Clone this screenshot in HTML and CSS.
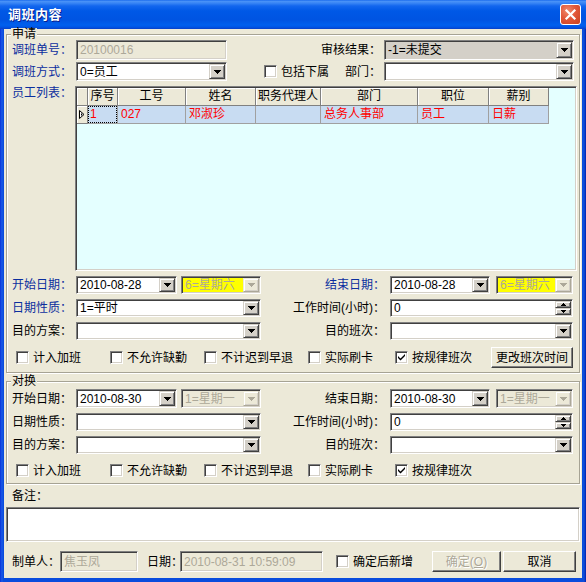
FILE: index.html
```html
<!DOCTYPE html>
<html lang="zh-CN">
<head>
<meta charset="utf-8">
<title>调班内容</title>
<link rel="stylesheet" href="styles.css">
</head>
<body>
<div class="window">
  <div class="titlebar">
    <span class="title">调班内容</span>
    <span class="close"><svg width="19" height="19" viewBox="0 0 19 19"><path d="M5.5 5.5 L13.5 13.5 M13.5 5.5 L5.5 13.5" stroke="#fff" stroke-width="2.2" stroke-linecap="square"/></svg></span>
  </div>
  <div class="client">
    <fieldset class="group g1">
      <legend>申请</legend>
      <div class="row h20">
        <span class="lbl blue">调班单号：</span>
        <div class="field dis w151"><span class="val">20100016</span></div>
        <span class="rlbl">审核结果：</span>
        <div class="field grey w190"><span class="val">-1=未提交</span><span class="dd"><i class="arr"></i></span></div>
      </div>
      <div class="row h19 mt2">
        <span class="lbl blue">调班方式：</span>
        <div class="field w151"><span class="val">0=员工</span><span class="dd"><i class="arr"></i></span></div>
        <span class="ck ck-sub"><span class="chk"></span>包括下属</span>
        <span class="rlbl">部门：</span>
        <div class="field w190"><span class="val"></span><span class="dd"><i class="arr"></i></span></div>
      </div>
      <div class="row list-row">
        <span class="lbl lbl-list blue">员工列表：</span>
        <div class="grid">
          <div class="grow ghead">
            <span class="gc gi"></span><span class="gc">序号</span><span class="gc">工号</span><span class="gc">姓名</span><span class="gc">职务代理人</span><span class="gc">部门</span><span class="gc">职位</span><span class="gc">薪别</span>
          </div>
          <div class="grow gdata">
            <span class="gc gi"><svg width="6" height="9" viewBox="0 0 6 9"><path d="M0.5 0.5 L5 4.5 L0.5 8.5 Z" fill="#fff" stroke="#000"/><path d="M2 3 L3.5 4.5 L2 6 Z" fill="#000"/></svg></span><span class="gc"><span class="focus">1</span></span><span class="gc">027</span><span class="gc">邓淑珍</span><span class="gc"></span><span class="gc">总务人事部</span><span class="gc">员工</span><span class="gc">日薪</span>
          </div>
        </div>
      </div>
      <div class="row h18 mt5 pr6">
        <span class="lbl blue">开始日期：</span>
        <div class="field w101"><span class="val">2010-08-28</span><span class="dd"><i class="arr"></i></span></div>
        <div class="field yellow w80 ml4"><span class="val">6=星期六</span><span class="dd off"><i class="arr"></i></span></div>
        <span class="rlbl rl5 blue">结束日期：</span>
        <div class="field w100"><span class="val">2010-08-28</span><span class="dd"><i class="arr"></i></span></div>
        <div class="field yellow w77 ml6"><span class="val">6=星期六</span><span class="dd off"><i class="arr"></i></span></div>
      </div>
      <div class="row h18 mt5 pr6">
        <span class="lbl blue">日期性质：</span>
        <div class="field w185"><span class="val">1=平时</span><span class="dd"><i class="arr"></i></span></div>
        <span class="rlbl rl5">工作时间(小时)：</span>
        <div class="field w183"><span class="val">0</span><span class="spin"><span class="sb"><i class="up"></i></span><span class="sb"><i class="down"></i></span></span></div>
      </div>
      <div class="row h18 mt5 pr6">
        <span class="lbl">目的方案：</span>
        <div class="field w185"><span class="val"></span><span class="dd"><i class="arr"></i></span></div>
        <span class="rlbl rl5">目的班次：</span>
        <div class="field w183"><span class="val"></span><span class="dd"><i class="arr"></i></span></div>
      </div>
      <div class="row h21 mt7 pr6">
        <span class="ck c1"><span class="chk"></span>计入加班</span>
        <span class="ck c2"><span class="chk"></span>不允许缺勤</span>
        <span class="ck c3"><span class="chk"></span>不计迟到早退</span>
        <span class="ck c4"><span class="chk"></span>实际刷卡</span>
        <span class="ck"><span class="chk on"><svg width="7" height="7" viewBox="0 0 7 7"><path d="M0 2 L2.5 4.5 L7 0 V2 L2.5 6.5 L0 4 Z" fill="#000"/></svg></span>按规律班次</span>
        <span class="btn b-change">更改班次时间</span>
      </div>
    </fieldset>

    <fieldset class="group g2">
      <legend>对换</legend>
      <div class="row h19 pr6">
        <span class="lbl">开始日期：</span>
        <div class="field w101"><span class="val">2010-08-30</span><span class="dd"><i class="arr"></i></span></div>
        <div class="field dis w80 ml4"><span class="val">1=星期一</span><span class="dd off"><i class="arr"></i></span></div>
        <span class="rlbl rl5">结束日期：</span>
        <div class="field w100"><span class="val">2010-08-30</span><span class="dd"><i class="arr"></i></span></div>
        <div class="field dis w77 ml6"><span class="val">1=星期一</span><span class="dd off"><i class="arr"></i></span></div>
      </div>
      <div class="row h18 mt5 pr6">
        <span class="lbl">日期性质：</span>
        <div class="field w185"><span class="val"></span><span class="dd"><i class="arr"></i></span></div>
        <span class="rlbl rl5">工作时间(小时)：</span>
        <div class="field w183"><span class="val">0</span><span class="spin"><span class="sb"><i class="up"></i></span><span class="sb"><i class="down"></i></span></span></div>
      </div>
      <div class="row h18 mt5 pr6">
        <span class="lbl">目的方案：</span>
        <div class="field w185"><span class="val"></span><span class="dd"><i class="arr"></i></span></div>
        <span class="rlbl rl5">目的班次：</span>
        <div class="field w183"><span class="val"></span><span class="dd"><i class="arr"></i></span></div>
      </div>
      <div class="row h21 mt6 pr6">
        <span class="ck c1"><span class="chk"></span>计入加班</span>
        <span class="ck c2"><span class="chk"></span>不允许缺勤</span>
        <span class="ck c3"><span class="chk"></span>不计迟到早退</span>
        <span class="ck c4"><span class="chk"></span>实际刷卡</span>
        <span class="ck"><span class="chk on"><svg width="7" height="7" viewBox="0 0 7 7"><path d="M0 2 L2.5 4.5 L7 0 V2 L2.5 6.5 L0 4 Z" fill="#000"/></svg></span>按规律班次</span>
      </div>
    </fieldset>

    <div class="memo-label">备注：</div>
    <div class="memo"></div>

    <div class="row foot">
      <span class="flbl f1">制单人：</span>
      <div class="field dis w78"><span class="val">焦玉凤</span></div>
      <span class="flbl f2">日期：</span>
      <div class="field dis w143"><span class="val">2010-08-31 10:59:09</span></div>
      <span class="ck ck-new"><span class="chk"></span>确定后新增</span>
      <span class="btn b-ok disabled">确定(<u>O</u>)</span>
      <span class="btn b-cancel">取消</span>
    </div>
  </div>
</div>
</body>
</html>
```

FILE: styles.css
```css
* { box-sizing: border-box; }
html, body { margin: 0; padding: 0; }
body {
  width: 586px;
  height: 582px;
  font-family: "Liberation Sans", "Noto Sans CJK SC", sans-serif;
  font-size: 12px;
  line-height: 14px;
  color: #000;
  background: #fff;
  overflow: hidden;
}

.window {
  width: 586px;
  height: 582px;
  display: flex;
  flex-direction: column;
  background: linear-gradient(to right, #0831D9 0, #1C5DE8 2px, #0A4CDD 3px, #0A4CDD 583px, #1050D8 584px, #0020B0 586px);
}

.titlebar {
  height: 29px;
  flex: none;
  display: flex;
  align-items: center;
  justify-content: space-between;
  padding: 0 5px 0 8px;
  background: linear-gradient(to bottom, #0A5DE9 0px, #4D95F8 1px, #3A86F5 3px, #1266EE 6px, #0058E6 11px, #0054E2 20px, #0060EE 25px, #0056E6 27px, #0840C8 29px);
}
.title {
  color: #fff;
  font-weight: bold;
  font-size: 13px;
  line-height: 16px;
  text-shadow: 1px 1px 0 #0A1E8C;
  letter-spacing: 0.5px;
}
.close {
  width: 21px;
  height: 21px;
  border: 1px solid #fff;
  border-radius: 3px;
  background: radial-gradient(circle at 35% 30%, #F08A6C 0, #E2583A 45%, #C8401E 100%);
  display: flex;
  align-items: center;
  justify-content: center;
}
.close svg { display: block; }

.client {
  flex: 1;
  margin: 0 4px 4px 4px;
  background: #ECE9D8;
  display: flex;
  flex-direction: column;
}

/* group boxes */
.group {
  margin: 0 0 0 2px;
  width: 574px;
  min-width: 0;
  padding: 0 0 4px 0;
  border: 1px solid #A6A394;
  box-shadow: inset 1px 1px #fff, 1px 1px #fff;
}
.group legend {
  padding: 0 1px;
  margin-left: 4px;
  line-height: 12px;
  height: 12px;
  background: #ECE9D8;
}
.g1 { margin-top: -1px; }
.g2 { margin-top: 2px; padding-top: 2px; padding-bottom: 2px; }

/* rows */
.row {
  display: flex;
  align-items: center;
  padding-right: 5px;
  white-space: nowrap;
}
.h18 { height: 18px; }
.h19 { height: 19px; }
.h20 { height: 20px; }
.h21 { height: 21px; }
.mt2 { margin-top: 2px; }
.mt5 { margin-top: 5px; }
.mt6 { margin-top: 6px; }
.mt7 { margin-top: 7px; }
.pr6 { padding-right: 6px; }
.ml4 { margin-left: 4px; }
.ml6 { margin-left: 6px; }

.lbl {
  margin-left: 5px;
  width: 64px;
  flex: none;
}
.blue { color: #0B2E9E; }
.rlbl {
  flex: 1;
  text-align: right;
  padding-right: 3px;
}
.rl5 { padding-right: 5px; }

.list-row {
  margin-top: 5px;
  align-items: flex-start;
  padding-right: 2px;
}
.lbl-list { width: 63px; margin-top: 0; }

/* fields */
.field {
  flex: none;
  align-self: stretch;
  display: flex;
  padding: 1px;
  background: #fff;
  border: 1px solid;
  border-color: #808080 #fff #fff #808080;
  box-shadow: inset 1px 1px #404040, inset -1px -1px #D4D0C8;
  overflow: hidden;
}
.field .val {
  flex: 1;
  min-width: 0;
  align-self: center;
  padding-left: 2px;
  overflow: hidden;
  white-space: nowrap;
}
.field.dis { background: #ECE9D8; color: #ACA899; }
.field.grey { background: #D4D0C8; }
.field.yellow { background: #FFFF00; color: #ACA899; }
.w77 { width: 77px; }
.w78 { width: 78px; }
.w80 { width: 80px; }
.w100 { width: 100px; }
.w101 { width: 101px; }
.w143 { width: 143px; }
.w151 { width: 151px; }
.w183 { width: 183px; }
.w185 { width: 185px; }
.w190 { width: 190px; }

.dd {
  width: 16px;
  flex: none;
  display: flex;
  align-items: center;
  justify-content: center;
  background: #D4D0C8;
  border: 1px solid;
  border-color: #D4D0C8 #404040 #404040 #D4D0C8;
  box-shadow: inset 1px 1px #fff, inset -1px -1px #808080;
}
.dd.off {
  background: #ECE9D8;
  border-color: #ECE9D8 #ACA899 #ACA899 #ECE9D8;
  box-shadow: inset 1px 1px #fff, inset -1px -1px #D4D0C8;
}
.arr {
  --c: #000;
  display: block;
  width: 7px;
  height: 4px;
  background:
    linear-gradient(var(--c), var(--c)) 0 0 / 7px 1px no-repeat,
    linear-gradient(var(--c), var(--c)) 1px 1px / 5px 1px no-repeat,
    linear-gradient(var(--c), var(--c)) 2px 2px / 3px 1px no-repeat,
    linear-gradient(var(--c), var(--c)) 3px 3px / 1px 1px no-repeat;
}
.dd.off .arr { --c: #ACA899; }

.spin {
  width: 16px;
  flex: none;
  display: flex;
  flex-direction: column;
}
.sb {
  flex: 1;
  display: flex;
  align-items: center;
  justify-content: center;
  background: #D4D0C8;
  border: 1px solid;
  border-color: #D4D0C8 #404040 #404040 #D4D0C8;
  box-shadow: inset 1px 1px #fff, inset -1px -1px #808080;
}
.up, .down {
  display: block;
  width: 5px;
  height: 3px;
}
.up {
  background:
    linear-gradient(#000, #000) 2px 0 / 1px 1px no-repeat,
    linear-gradient(#000, #000) 1px 1px / 3px 1px no-repeat,
    linear-gradient(#000, #000) 0 2px / 5px 1px no-repeat;
}
.down {
  background:
    linear-gradient(#000, #000) 0 0 / 5px 1px no-repeat,
    linear-gradient(#000, #000) 1px 1px / 3px 1px no-repeat,
    linear-gradient(#000, #000) 2px 2px / 1px 1px no-repeat;
}

/* checkboxes */
.ck {
  display: inline-flex;
  align-items: center;
  gap: 4px;
  flex: none;
}
.chk {
  width: 13px;
  height: 13px;
  flex: none;
  background: #fff;
  border: 1px solid;
  border-color: #808080 #fff #fff #808080;
  box-shadow: inset 1px 1px #404040, inset -1px -1px #D4D0C8;
  display: flex;
  align-items: center;
  justify-content: center;
}
.chk svg { display: block; }
.ck-sub { margin-left: 37px; }
.c1 { margin-left: 9px; width: 94px; }
.c2 { width: 94px; }
.c3 { width: 104px; }
.c4 { width: 87px; }

/* buttons */
.btn {
  flex: none;
  align-self: stretch;
  display: flex;
  align-items: center;
  justify-content: center;
  background: #ECE9D8;
  border: 1px solid;
  border-color: #fff #404040 #404040 #fff;
  box-shadow: inset -1px -1px #808080;
}
.b-change { margin-left: auto; width: 82px; }
.btn.disabled { color: #ACA899; text-shadow: 1px 1px 0 #fff; }
.btn u { text-decoration: underline; }

/* grid */
.grid {
  width: 502px;
  height: 185px;
  flex: none;
  padding: 1px;
  background: #E4FFFF;
  border: 1px solid;
  border-color: #808080 #fff #fff #808080;
  box-shadow: inset 1px 1px #404040, inset -1px -1px #D4D0C8;
}
.grow {
  display: grid;
  grid-template-columns: 11px 30px 68px 70px 65px 97px 71px 60px;
  height: 18px;
}
.gc {
  line-height: 17px;
  white-space: nowrap;
  overflow: hidden;
}
.ghead .gc {
  background: #ECE9D8;
  text-align: center;
  border-right: 1px solid #808080;
  border-bottom: 1px solid #808080;
  box-shadow: inset 1px 1px #fff;
}
.gdata .gc {
  background: #C8DCF2;
  color: #f00;
  padding-left: 3px;
  border-right: 1px solid #A0A0A0;
  border-bottom: 1px solid #A0A0A0;
}
.gdata .gc.gi {
  background: #ECE9D8;
  padding-left: 2px;
  border-right: 1px solid #808080;
  border-bottom: 1px solid #808080;
  box-shadow: inset 1px 1px #fff;
  display: flex;
  align-items: center;
}
.gdata .gc:nth-child(2) { padding: 0; }
.focus {
  display: block;
  height: 17px;
  padding-left: 2px;
  outline: 1px dotted #000;
  outline-offset: -1px;
}

/* memo + footer */
.memo-label {
  margin: 6px 0 0 8px;
  line-height: 12px;
  height: 12px;
}
.memo {
  margin: 5px 0 0 2px;
  width: 574px;
  height: 35px;
  background: #fff;
  border: 1px solid;
  border-color: #808080 #fff #fff #808080;
  box-shadow: inset 1px 1px #404040, inset -1px -1px #D4D0C8;
}
.foot {
  height: 21px;
  margin-top: 9px;
  padding-right: 6px;
}
.flbl { flex: none; }
.f1 { margin-left: 8px; width: 48px; }
.f2 { margin-left: 9px; width: 33px; }
.ck-new { margin-left: 13px; }
.b-ok { margin-left: auto; width: 69px; }
.b-cancel { margin-left: 2px; width: 73px; }
```
